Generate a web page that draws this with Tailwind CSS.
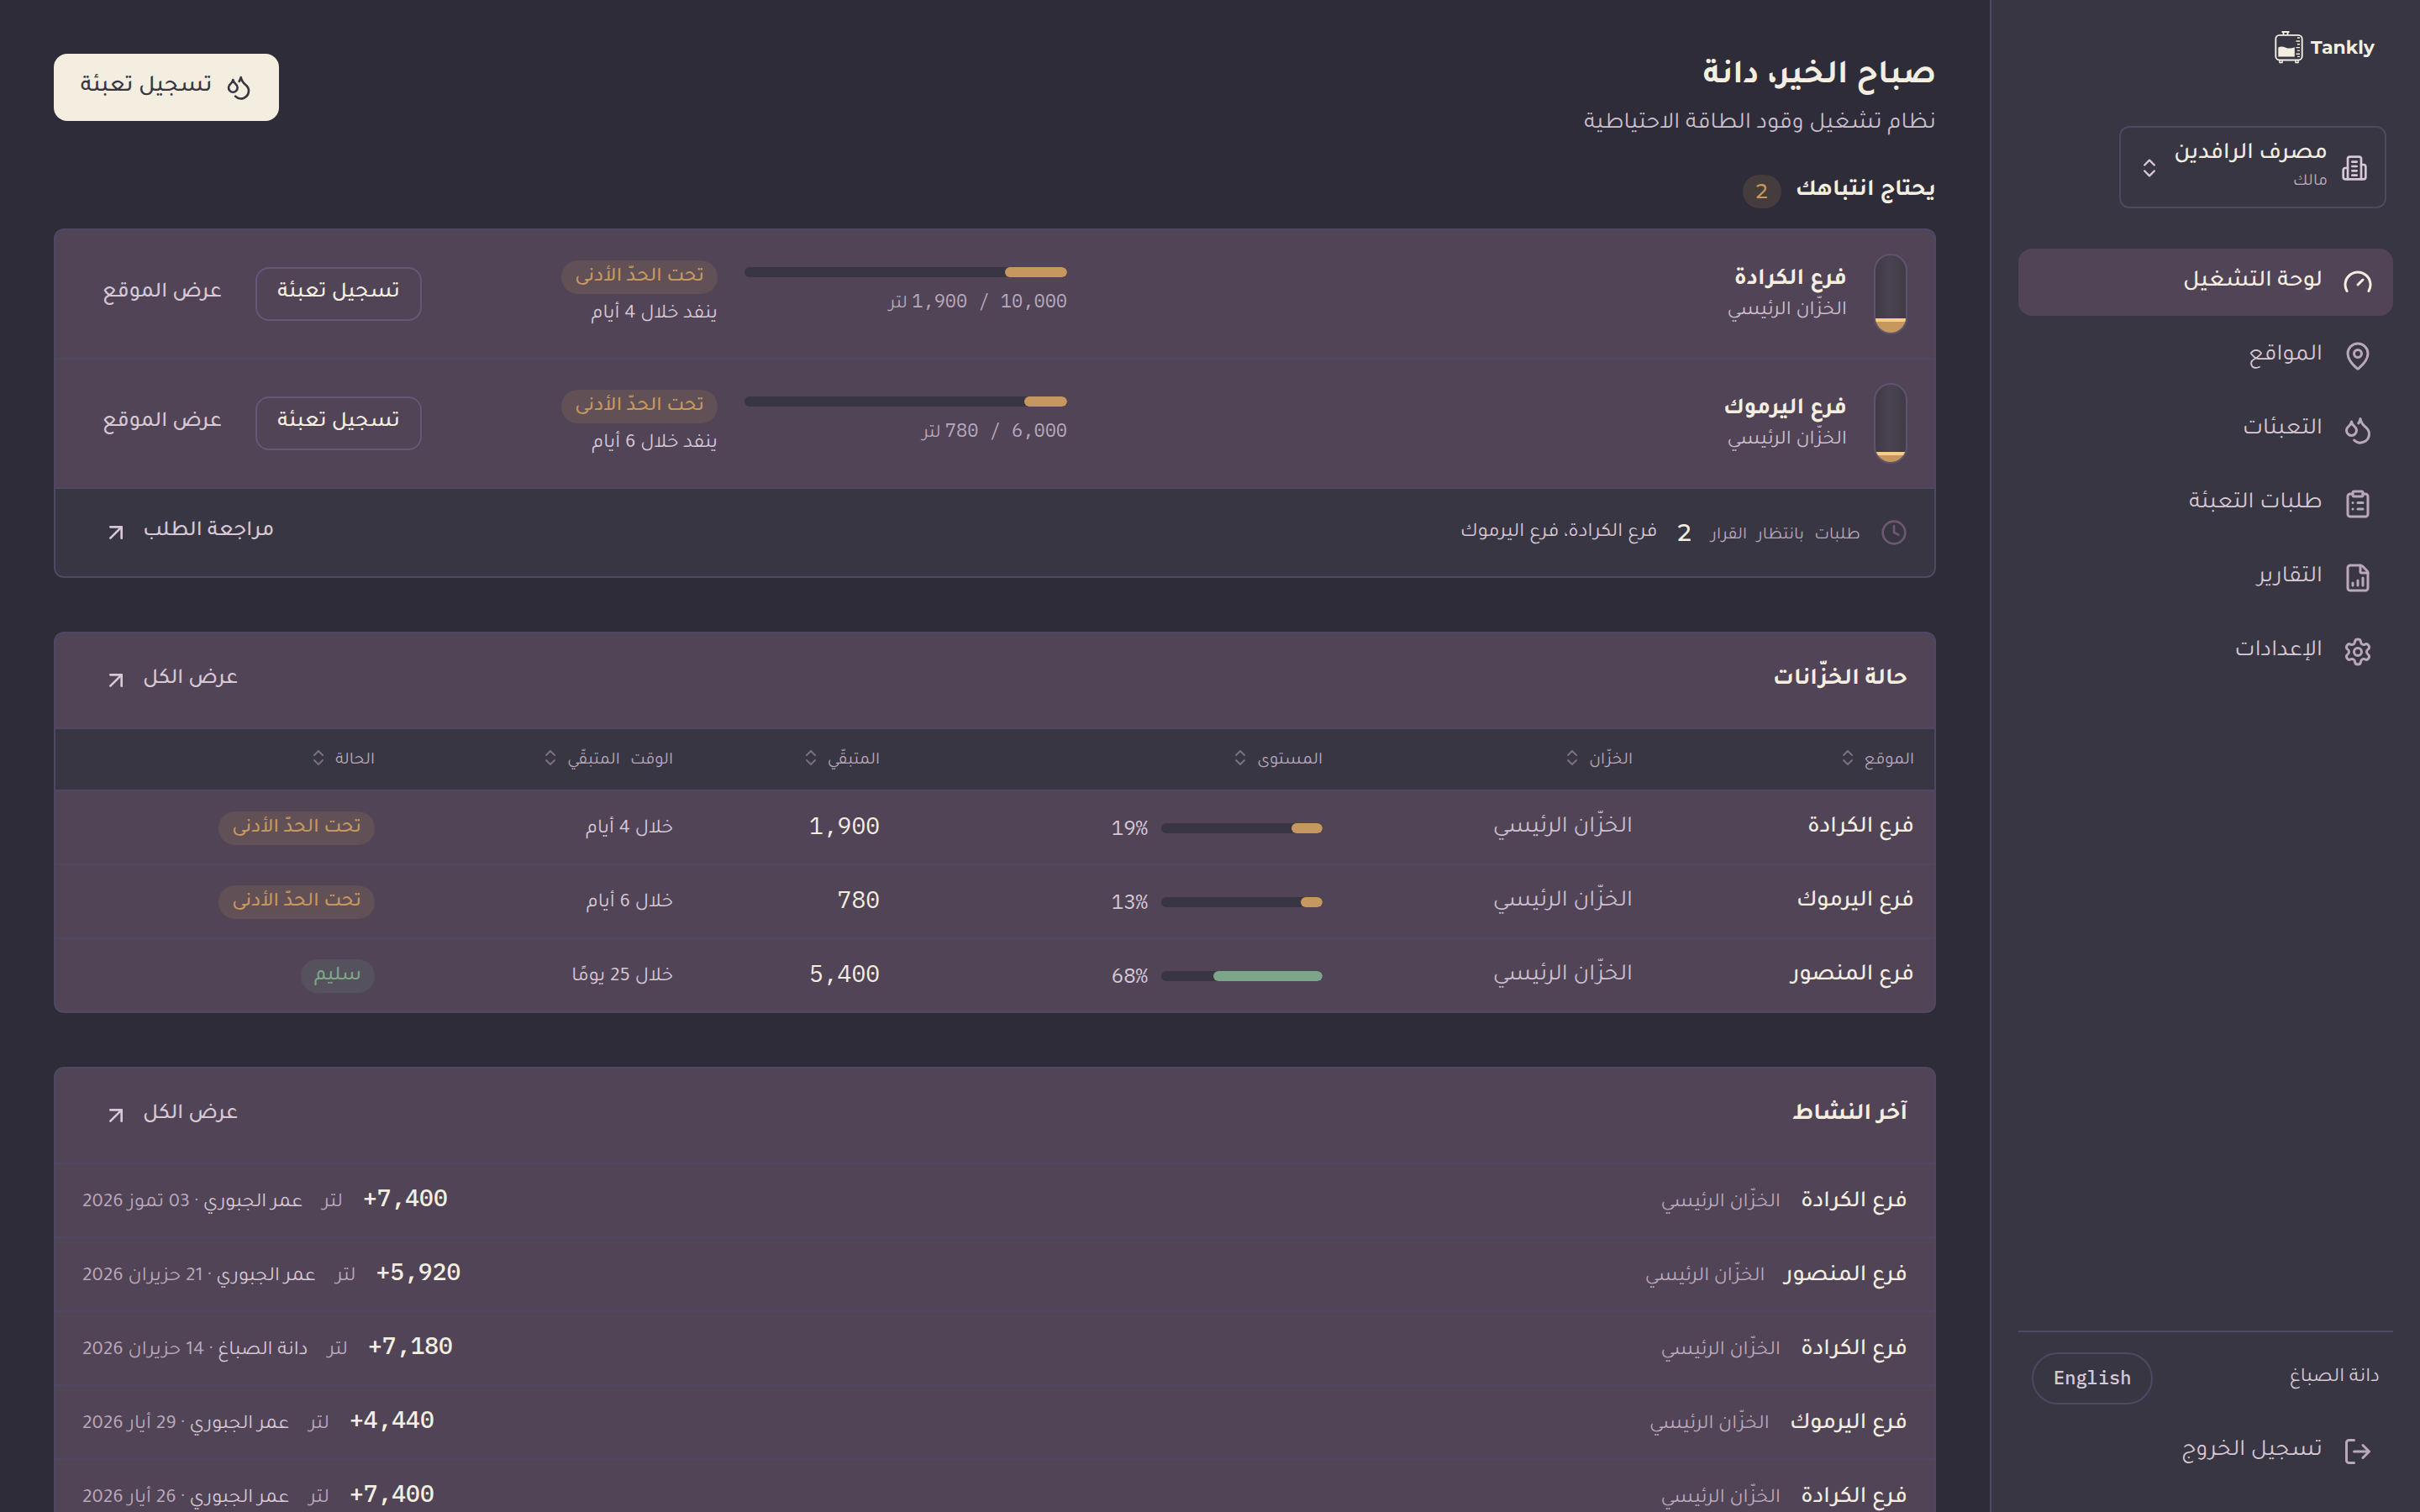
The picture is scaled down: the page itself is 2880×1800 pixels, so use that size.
<!DOCTYPE html>
<html lang="ar" dir="rtl">
<head>
    <meta charset="UTF-8">
    <meta name="viewport" content="width=device-width, initial-scale=1.0">
    <title>Tankly</title>
    <script src="https://cdn.jsdelivr.net/npm/@tailwindcss/browser@4"></script>
</head>
<body class="flex h-[1800px] w-[2880px] overflow-hidden bg-[#2e2c39] font-['Tajawal','Noto_Sans_Arabic',sans-serif] text-[28px] leading-[42px] text-[#f4eee0]">

    <!-- Shared icons -->
    <svg class="hidden">
        <defs>
            <symbol id="drops" viewBox="0 0 24 24"><path d="M7 16.3c2.2 0 4-1.83 4-4.05 0-1.16-.57-2.26-1.71-3.19S7.29 6.75 7 5.3c-.29 1.45-1.14 2.84-2.29 3.76S3 11.1 3 12.25c0 2.22 1.8 4.05 4 4.05z"/><path d="M12.56 6.6A10.97 10.97 0 0 0 14 3.02c.5 2.5 2 4.9 4 6.5s3 3.5 3 5.5a6.98 6.98 0 0 1-11.91 4.97"/></symbol>
            <symbol id="sort" viewBox="0 0 24 24"><path d="m7 15 5 5 5-5"/><path d="m7 9 5-5 5 5"/></symbol>
            <symbol id="arrow" viewBox="0 0 24 24"><path d="M7 7h10v10"/><path d="M7 17 17 7"/></symbol>
        </defs>
    </svg>

    <!-- Sidebar -->
    <aside class="flex w-[512px] shrink-0 flex-col border-l-2 border-[#4f4863] bg-[#393643] px-8 pt-9 pb-8">
        <div dir="ltr" class="flex h-10 items-center justify-end gap-2 pr-[22px]">
            <svg class="h-10 w-9" viewBox="0 0 36 40" fill="none" stroke="#f4eee0">
                <path d="M9.5 2h9M11.5 2.5v3M16.5 2.5v3" stroke-width="1.8"/>
                <rect x="2.3" y="5.9" width="31.4" height="29.6" rx="4.5" stroke-width="1.9"/>
                <path d="M5.3 20.5c3-1.6 6-1 9 .2s7 1.2 10.5-.4V31.6H5.3z" fill="#f4eee0" stroke="none"/>
                <path d="M28 9h3M26.5 13H31M28 16.800h3M26.5 20.6H31M28 24.400h3M26.5 28.2H31M28 31.400h3" stroke-width="1.4"/>
                <path d="M7 36v2.5h3V36M26 36v2.5h3V36" stroke-width="1.5"/>
            </svg>
            <span class="pt-0.5 font-['Montserrat','Open_Sans',sans-serif] text-[22px] leading-none font-bold">Tankly</span>
        </div>

        <button class="mt-[74px] mr-2 flex h-[98px] w-[318px] items-center justify-between rounded-xl border-2 border-[#4f4863] px-5">
            <svg class="size-8 translate-y-px text-[#d6c8d4]" viewBox="0 0 24 24" fill="none" stroke="currentColor" stroke-width="2" stroke-linecap="round" stroke-linejoin="round"><path d="M10 6.5h4M10 10.5h4M10 14.5h4M10 18.5h4"/><path d="M6 12H4a2 2 0 0 0-2 2v6a2 2 0 0 0 2 2h16a2 2 0 0 0 2-2v-9a2 2 0 0 0-2-2h-2"/><path d="M6 22V4a2 2 0 0 1 2-2h8a2 2 0 0 1 2 2v18"/></svg>
            <span class="mr-4 flex grow flex-col text-right">
                <span class="text-[28px] leading-[35px] font-medium">مصرف الرافدين</span>
                <span class="text-[20px] leading-[30px] text-[#bcaebd]">مالك</span>
            </span>
            <svg class="size-7 translate-y-px text-[#d6c8d4]" fill="none" stroke="currentColor" stroke-width="2" stroke-linecap="round" stroke-linejoin="round"><use href="#sort"/></svg>
        </button>

        <nav class="mt-12 flex flex-col gap-2 text-[#d6c8d4]">
            <a class="flex h-20 items-center gap-6 rounded-2xl bg-[#504456] px-6 font-medium text-[#f4eee0]">
                <svg class="size-9" viewBox="0 0 24 24" fill="none" stroke="currentColor" stroke-width="2" stroke-linecap="round" stroke-linejoin="round"><path d="m12 14 4-4"/><path d="M3.34 19a10 10 0 1 1 17.32 0"/></svg>
                <span>لوحة التشغيل</span>
            </a>
            <a class="flex h-20 items-center gap-6 px-6">
                <svg class="size-9 text-[#b9a8bb]" viewBox="0 0 24 24" fill="none" stroke="currentColor" stroke-width="2" stroke-linecap="round" stroke-linejoin="round"><path d="M20 10c0 4.993-5.539 10.193-7.399 11.799a1 1 0 0 1-1.202 0C9.539 20.193 4 14.993 4 10a8 8 0 0 1 16 0"/><circle cx="12" cy="10" r="3"/></svg>
                <span>المواقع</span>
            </a>
            <a class="flex h-20 items-center gap-6 px-6">
                <svg class="size-9 text-[#b9a8bb]" fill="none" stroke="currentColor" stroke-width="2" stroke-linecap="round" stroke-linejoin="round"><use href="#drops"/></svg>
                <span>التعبئات</span>
            </a>
            <a class="flex h-20 items-center gap-6 px-6">
                <svg class="size-9 text-[#b9a8bb]" viewBox="0 0 24 24" fill="none" stroke="currentColor" stroke-width="2" stroke-linecap="round" stroke-linejoin="round"><rect width="8" height="4" x="8" y="2" rx="1"/><path d="M16 4h2a2 2 0 0 1 2 2v14a2 2 0 0 1-2 2H6a2 2 0 0 1-2-2V6a2 2 0 0 1 2-2h2"/><path d="M12 11h4M12 16h4M8 11h.01M8 16h.01"/></svg>
                <span>طلبات التعبئة</span>
            </a>
            <a class="flex h-20 items-center gap-6 px-6">
                <svg class="size-9 text-[#b9a8bb]" viewBox="0 0 24 24" fill="none" stroke="currentColor" stroke-width="2" stroke-linecap="round" stroke-linejoin="round"><path d="M6 22a2 2 0 0 1-2-2V4a2 2 0 0 1 2-2h8a2.4 2.4 0 0 1 1.704.706l3.588 3.588A2.4 2.4 0 0 1 20 8v12a2 2 0 0 1-2 2z"/><path d="M14 2v5a1 1 0 0 0 1 1h5M8 18v-2M12 18v-4M16 18v-6"/></svg>
                <span>التقارير</span>
            </a>
            <a class="flex h-20 items-center gap-6 px-6">
                <svg class="size-9 text-[#b9a8bb]" viewBox="0 0 24 24" fill="none" stroke="currentColor" stroke-width="2" stroke-linecap="round" stroke-linejoin="round"><path d="M9.671 4.136a2.34 2.34 0 0 1 4.659 0 2.34 2.34 0 0 0 3.319 1.915 2.34 2.34 0 0 1 2.33 4.033 2.34 2.34 0 0 0 0 3.831 2.34 2.34 0 0 1-2.33 4.033 2.34 2.34 0 0 0-3.319 1.915 2.34 2.34 0 0 1-4.659 0 2.34 2.34 0 0 0-3.32-1.915 2.34 2.34 0 0 1-2.33-4.033 2.34 2.34 0 0 0 0-3.831A2.34 2.34 0 0 1 6.35 6.051a2.34 2.34 0 0 0 3.319-1.915"/><circle cx="12" cy="12" r="3"/></svg>
                <span>الإعدادات</span>
            </a>
        </nav>

        <div class="mt-auto border-t-2 border-[#4f4863] pt-6 text-[#d6c8d4]">
            <div class="flex items-center justify-between px-4">
                <span class="text-[24px]">دانة الصباغ</span>
                <button class="h-[62px] rounded-full border-2 border-[#4f4863] px-6 pb-0.5 font-['IBM_Plex_Mono','Liberation_Mono',monospace] text-[22px] font-medium">English</button>
            </div>
            <a class="mt-4 flex h-20 items-center gap-6 px-6">
                <svg class="size-9 text-[#b9a8bb]" viewBox="0 0 24 24" fill="none" stroke="currentColor" stroke-width="2" stroke-linecap="round" stroke-linejoin="round"><path d="m16 17 5-5-5-5M21 12H9M9 21H5a2 2 0 0 1-2-2V5a2 2 0 0 1 2-2h4"/></svg>
                <span>تسجيل الخروج</span>
            </a>
        </div>
    </aside>

    <!-- Main content -->
    <main class="flex grow flex-col px-16 pt-16">
        <header class="flex h-[100px] shrink-0 items-start justify-between">
            <div>
                <h1 class="text-[40px] leading-[56px] font-bold">صباح الخير، دانة</h1>
                <p class="mt-[7px] text-[#cbbfcc]">نظام تشغيل وقود الطاقة الاحتياطية</p>
            </div>
            <button class="flex h-20 w-[268px] items-center justify-center gap-4 rounded-2xl bg-[#f4eee0] font-medium text-[#393643]">
                <svg class="size-8" fill="none" stroke="currentColor" stroke-width="2" stroke-linecap="round" stroke-linejoin="round"><use href="#drops"/></svg>
                تسجيل تعبئة
            </button>
        </header>

        <!-- Needs attention -->
        <div class="mt-11 flex h-10 shrink-0 items-center gap-[17px]">
            <h2 class="font-bold">يحتاج انتباهك</h2>
            <span class="flex h-10 w-[46px] items-center justify-center rounded-full bg-[#c6985f]/15 font-['Montserrat','Open_Sans',sans-serif] text-[24px] font-medium text-[#c6985f]">2</span>
        </div>
        <section class="mt-6 shrink-0 overflow-hidden rounded-xl border-2 border-[#4f4863] bg-[#504456]">
            <div id="alerts"></div>
            <div class="flex h-[104px] items-center gap-6 bg-[#393643] px-8">
                <svg class="size-8 text-[#6d5872]" viewBox="0 0 24 24" fill="none" stroke="currentColor" stroke-width="2" stroke-linecap="round" stroke-linejoin="round"><circle cx="12" cy="12" r="10"/><path d="M12 6v6l4 2"/></svg>
                <span class="font-['IBM_Plex_Mono','Tajawal',sans-serif] text-[20.5px] text-[#b9a8bb]">طلبات بانتظار القرار</span>
                <span class="font-['Montserrat','Open_Sans',sans-serif] text-[28px] font-medium">2</span>
                <span class="pt-0.5 text-[24px] text-[#d6c8d4]">فرع الكرادة، فرع اليرموك</span>
                <a class="mr-auto flex items-center gap-4 pl-6 text-[26px] font-medium text-[#d6c8d4]">
                    <span class="pb-0.5">مراجعة الطلب</span>
                    <svg class="size-8" fill="none" stroke="currentColor" stroke-width="2" stroke-linecap="round" stroke-linejoin="round"><use href="#arrow"/></svg>
                </a>
            </div>
        </section>

        <!-- Tank status -->
        <section class="mt-16 shrink-0 overflow-hidden rounded-xl border-2 border-[#4f4863] bg-[#504456]">
            <div class="flex h-[114px] items-center justify-between border-b-2 border-[#4f4863] px-8">
                <h2 class="font-bold">حالة الخزّانات</h2>
                <a class="flex items-center gap-4 pl-6 text-[26px] font-medium text-[#d6c8d4]">
                    <span class="pb-0.5">عرض الكل</span>
                    <svg class="size-8" fill="none" stroke="currentColor" stroke-width="2" stroke-linecap="round" stroke-linejoin="round"><use href="#arrow"/></svg>
                </a>
            </div>
            <div id="thead" class="grid h-[74px] grid-cols-[335px_369px_527px_246px_355px_404px] items-center border-b-2 border-[#4f4863] bg-[#393643] pb-1 font-['IBM_Plex_Mono','Tajawal',sans-serif] text-[20.5px] text-[#b9a8bb]"></div>
            <div id="tanks"></div>
        </section>

        <!-- Recent activity -->
        <section class="mt-16 shrink-0 overflow-hidden rounded-xl border-2 border-[#4f4863] bg-[#504456]">
            <div class="flex h-[114px] items-center justify-between border-b-2 border-[#4f4863] px-8">
                <h2 class="font-bold">آخر النشاط</h2>
                <a class="flex items-center gap-4 pl-6 text-[26px] font-medium text-[#d6c8d4]">
                    <span class="pb-0.5">عرض الكل</span>
                    <svg class="size-8" fill="none" stroke="currentColor" stroke-width="2" stroke-linecap="round" stroke-linejoin="round"><use href="#arrow"/></svg>
                </a>
            </div>
            <div id="activity"></div>
        </section>
    </main>

    <script>
        const tank = "الخزّان الرئيسي";
        const low = '<span class="inline-block h-10 rounded-full bg-[#c6985f]/15 px-4 text-[24px] leading-[42px] font-medium text-[#c6985f]">تحت الحدّ الأدنى</span>';
        const ok = '<span class="inline-block h-10 rounded-full bg-[#7ca589]/15 px-4 text-[24px] leading-[42px] font-medium text-[#7ca589]">سليم</span>';

        const alerts = [
            { name: "فرع الكرادة", level: "1,900 / 10,000", pct: 19, left: "ينفد خلال 4 أيام" },
            { name: "فرع اليرموك", level: "780 / 6,000", pct: 13, left: "ينفد خلال 6 أيام" }
        ];

        document.getElementById("alerts").innerHTML = alerts.map(a => `
            <div class="flex h-[154px] items-center border-b-2 border-[#4f4863] px-8">
                <div class="relative h-24 w-10 overflow-hidden rounded-full border-2 border-[#5f5470] bg-linear-to-r from-[#403b47] via-[#4a4251] to-[#403b47]">
                    <div class="absolute inset-x-0 bottom-0 border-t-4 border-[#f8cd84] bg-[#c6985f]" style="height: ${a.pct}%"></div>
                </div>
                <div class="mr-8 grow pt-[3px]">
                    <div class="leading-[38px] font-bold">${a.name}</div>
                    <div class="text-[24px] leading-9 text-[#cbbfcc]">${tank}</div>
                </div>
                <div class="h-16 w-96">
                    <div class="h-3 overflow-hidden rounded-full bg-[#393643]"><div class="h-full rounded-full bg-[#c6985f]" style="width: calc(${a.pct}% + 1px)"></div></div>
                    <div class="mt-2 text-[22px] leading-10 text-[#b9a8bb]"><span dir="ltr" class="font-['IBM_Plex_Mono','Liberation_Mono',monospace]">${a.level}</span> لتر</div>
                </div>
                <div class="mr-8 h-20 w-[350px]">
                    <div class="flex">${low}</div>
                    <div class="mt-[7px] text-[24px] leading-9 text-[#d6c8d4]">${a.left}</div>
                </div>
                <div class="mr-0.5 flex gap-4 text-[26px] font-medium">
                    <button class="h-16 w-[198px] rounded-2xl border-2 border-[#675777] pb-[3px]">تسجيل تعبئة</button>
                    <button class="h-16 px-6 pb-[3px] text-[#d6c8d4]">عرض الموقع</button>
                </div>
            </div>`).join("");

        document.getElementById("thead").innerHTML = ["الموقع", "الخزّان", "المستوى", "المتبقّي", "الوقت المتبقّي", "الحالة"].map(h => `
            <div class="flex items-center gap-2 px-6">${h}<svg class="size-6 opacity-50" fill="none" stroke="currentColor" stroke-width="2" stroke-linecap="round" stroke-linejoin="round"><use href="#sort"/></svg></div>`).join("");

        const tanks = [
            { name: "فرع الكرادة", pct: 19, bar: 19.5, left: "1,900", time: "خلال 4 أيام", badge: low },
            { name: "فرع اليرموك", pct: 13, bar: 13.5, left: "780", time: "خلال 6 أيام", badge: low },
            { name: "فرع المنصور", pct: 68, bar: 67.5, left: "5,400", time: "خلال 25 يومًا", badge: ok }
        ];

        document.getElementById("tanks").innerHTML = tanks.map(t => `
            <div class="grid h-[88px] grid-cols-[335px_369px_527px_246px_355px_404px] items-center border-b-2 border-[#4f4863] *:px-6 last:h-[86px] last:border-b-0">
                <div class="pt-0.5 font-medium">${t.name}</div>
                <div class="pt-0.5 text-[#cbbfcc]">${tank}</div>
                <div class="flex items-center gap-4 pt-0.5">
                    <div class="h-3 w-48 overflow-hidden rounded-full bg-[#393643]"><div class="h-full rounded-full ${t.pct > 50 ? "bg-[#7ca589]" : "bg-[#c6985f]"}" style="width: ${t.bar}%"></div></div>
                    <span class="pb-0.5 font-['IBM_Plex_Mono','Liberation_Mono',monospace] text-[24px] text-[#d6c8d4]">${t.pct}%</span>
                </div>
                <div class="pb-1 font-['IBM_Plex_Mono','Liberation_Mono',monospace]">${t.left}</div>
                <div class="pt-[5px] text-[24px] text-[#d6c8d4]">${t.time}</div>
                <div class="flex pt-0.5">${t.badge}</div>
            </div>`).join("");

        const activity = [
            ["فرع الكرادة", "+7,400", "عمر الجبوري", "03 تموز 2026"],
            ["فرع المنصور", "+5,920", "عمر الجبوري", "21 حزيران 2026"],
            ["فرع الكرادة", "+7,180", "دانة الصباغ", "14 حزيران 2026"],
            ["فرع اليرموك", "+4,440", "عمر الجبوري", "29 أيار 2026"],
            ["فرع الكرادة", "+7,400", "عمر الجبوري", "26 أيار 2026"]
        ];

        document.getElementById("activity").innerHTML = activity.map(([name, amount, by, date]) => `
            <div class="flex h-[88px] items-center border-b-2 border-[#4f4863] px-8">
                <div class="flex grow items-baseline gap-6 pt-[6px]">
                    <span class="font-medium">${name}</span>
                    <span class="text-[24px] text-[#b9a8bb]">${tank}</span>
                </div>
                <div class="flex items-baseline gap-6 text-[24px] text-[#b9a8bb]">
                    <span dir="ltr" class="font-['IBM_Plex_Mono','Liberation_Mono',monospace] text-[28px] font-medium text-[#f4eee0]">${amount}</span>
                    <span>لتر</span>
                    <span><span class="text-[#d6c8d4]">${by}</span> · ${date}</span>
                </div>
            </div>`).join("");
    </script>

</body>
</html>
